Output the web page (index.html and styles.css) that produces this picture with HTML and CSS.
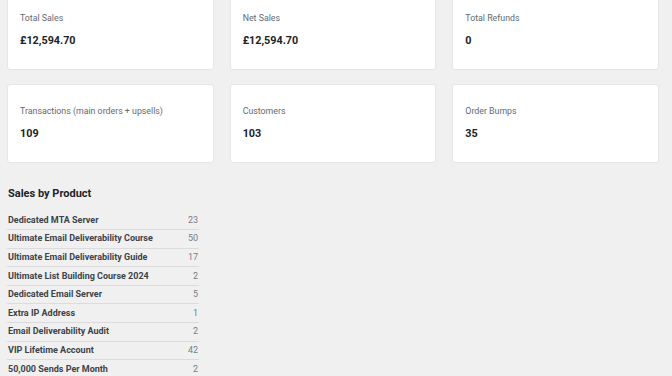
FILE: index.html
```html
<!DOCTYPE html>
<html lang="en">
<head>
<meta charset="utf-8">
<title>Sales Overview</title>
<link rel="stylesheet" href="styles.css">
</head>
<body>
<main class="page">
  <section class="stats">
    <div class="card"><div class="label">Total Sales</div><div class="value">£12,594.70</div></div>
    <div class="card"><div class="label">Net Sales</div><div class="value">£12,594.70</div></div>
    <div class="card"><div class="label">Total Refunds</div><div class="value">0</div></div>
    <div class="card"><div class="label">Transactions (main orders + upsells)</div><div class="value">109</div></div>
    <div class="card"><div class="label">Customers</div><div class="value">103</div></div>
    <div class="card"><div class="label">Order Bumps</div><div class="value">35</div></div>
  </section>
  <h2 class="section-title">Sales by Product</h2>
  <table class="products">
    <tbody>
      <tr><td class="name">Dedicated MTA Server</td><td class="count">23</td></tr>
      <tr><td class="name">Ultimate Email Deliverability Course</td><td class="count">50</td></tr>
      <tr><td class="name">Ultimate Email Deliverability Guide</td><td class="count">17</td></tr>
      <tr><td class="name">Ultimate List Building Course 2024</td><td class="count">2</td></tr>
      <tr><td class="name">Dedicated Email Server</td><td class="count">5</td></tr>
      <tr><td class="name">Extra IP Address</td><td class="count">1</td></tr>
      <tr><td class="name">Email Deliverability Audit</td><td class="count">2</td></tr>
      <tr><td class="name">VIP Lifetime Account</td><td class="count">42</td></tr>
      <tr><td class="name">50,000 Sends Per Month</td><td class="count">2</td></tr>
    </tbody>
  </table>
</main>
</body>
</html>
```
FILE: styles.css
```css
html, body {
  margin: 0;
  padding: 0;
  background: #f0f0f1;
  font-family: Roboto, "Liberation Sans", Arial, sans-serif;
  color: #1d2327;
  overflow: hidden;
}

.page {
  padding: 0 13px 0 7px;
}

.stats {
  display: grid;
  grid-template-columns: repeat(3, 1fr);
  column-gap: 16px;
  row-gap: 14px;
  margin-top: -9px;
}

.card {
  box-sizing: border-box;
  height: 79px;
  background: #fff;
  border: 1px solid #e6e6e7;
  border-radius: 3px;
  padding: 20px 12px 0;
}

.label {
  font-size: 8.8px;
  line-height: 12px;
  color: #646970;
}

.value {
  margin-top: 10px;
  font-size: 10.8px;
  line-height: 14px;
  font-weight: 700;
  color: #1d2327;
}

.section-title {
  margin: 24px 0 0 1px;
  font-size: 11px;
  line-height: 14px;
  font-weight: 700;
  color: #1d2327;
}

.products {
  margin-top: 10px;
  width: 192px;
  border-collapse: collapse;
}

.products td {
  height: 18.6px;
  padding: 0 1px;
  font-size: 9px;
  line-height: 11px;
  border-bottom: 1px solid #dcdcde;
  box-sizing: border-box;
}

.products .name {
  font-weight: 700;
  color: #3c434a;
}

.products .count {
  text-align: right;
  color: #787c82;
}
```
